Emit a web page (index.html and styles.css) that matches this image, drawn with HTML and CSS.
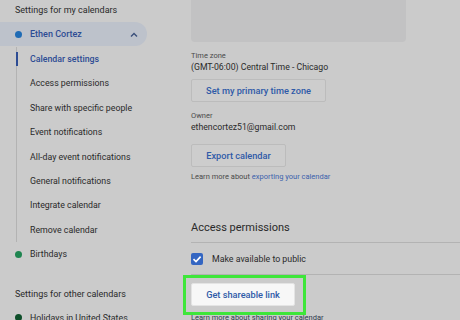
FILE: index.html
```html
<!DOCTYPE html>
<html>
<head>
<meta charset="utf-8">
<link rel="stylesheet" href="styles.css">
</head>
<body>
<div class="app">
  <aside class="sidebar">
    <div class="side-heading">Settings for my calendars</div>
    <div class="cal-row active">
      <span class="dot dot-blue"></span>
      <span class="cal-name">Ethen Cortez</span>
      <svg class="chev" width="8" height="5" viewBox="0 0 8 5"><path d="M1 4.5 L4 1.5 L7 4.5" fill="none" stroke="#3a4f7a" stroke-width="1.4"/></svg>
    </div>
    <ul class="sub-list">
      <li class="sub-item current">Calendar settings</li>
      <li class="sub-item">Access permissions</li>
      <li class="sub-item">Share with specific people</li>
      <li class="sub-item">Event notifications</li>
      <li class="sub-item">All-day event notifications</li>
      <li class="sub-item">General notifications</li>
      <li class="sub-item">Integrate calendar</li>
      <li class="sub-item">Remove calendar</li>
    </ul>
    <div class="cal-row">
      <span class="dot dot-green"></span>
      <span class="cal-plain">Birthdays</span>
    </div>
    <div class="side-heading other">Settings for other calendars</div>
    <div class="cal-row">
      <span class="dot dot-dark"></span>
      <span class="cal-plain">Holidays in United States</span>
    </div>
  </aside>
  <main class="main">
    <div class="map-box"></div>
    <div class="label first">Time zone</div>
    <div class="value">(GMT-06:00) Central Time - Chicago</div>
    <button class="btn tz">Set my primary time zone</button>
    <div class="label owner">Owner</div>
    <div class="value">ethencortez51@gmail.com</div>
    <button class="btn export">Export calendar</button>
    <div class="learn">Learn more about <span class="link">exporting your calendar</span></div>
    <h2 class="section-title">Access permissions</h2>
    <div class="check-row">
      <span class="checkbox"><svg width="12" height="12" viewBox="0 0 12 12"><path d="M2.5 6.2 L5 8.6 L9.6 3.6" fill="none" stroke="#fff" stroke-width="1.6"/></svg></span>
      <span class="check-label">Make available to public</span>
    </div>
    <div class="highlight">
      <button class="btn share">Get shareable link</button>
    </div>
    <div class="learn dark">Learn more about sharing your calendar</div>
  </main>
</div>
</body>
</html>
```
FILE: styles.css
```css
* { box-sizing: border-box; }
html, body { margin: 0; padding: 0; }
body {
  background: #cbcbcb;
  font-family: Roboto, "Liberation Sans", sans-serif;
  color: #2a2a2a;
  width: 460px;
  height: 320px;
  overflow: hidden;
}
.app { display: flex; }
.sidebar {
  width: 191px;
  flex: none;
  padding-top: 3px;
}
.side-heading {
  font-size: 9px;
  line-height: 15px;
  padding-left: 15px;
  color: #2a2a2a;
  white-space: nowrap;
}
.side-heading.other { margin-top: 20px; }
.cal-row {
  display: flex;
  align-items: center;
  height: 24.4px;
  padding-left: 15px;
  width: 147px;
  white-space: nowrap;
}
.cal-row.active {
  margin-top: 4px;
  height: 24px;
  background: #bdc2cb;
  border-radius: 0 12px 12px 0;
}
.side-heading.other + .cal-row { margin-top: 4px; }
.dot {
  width: 7px;
  height: 7px;
  border-radius: 50%;
  flex: none;
  margin-right: 8px;
}
.dot-blue { background: #1f6bb5; }
.dot-green { background: #1f8550; }
.dot-dark { background: #0e4f2a; }
.cal-name {
  font-size: 9px;
  font-weight: 500;
  color: #2d4c94;
  flex: 1;
}
.chev { margin-right: 9px; }
.cal-plain { font-size: 8.8px; color: #2a2a2a; }
.sub-list {
  list-style: none;
  margin: 1px 0 0 16px;
  padding: 0;
  border-left: 1px solid #b3b3b3;
}
.sub-item {
  height: 24.4px;
  line-height: 24.4px;
  padding-left: 13px;
  font-size: 8.8px;
  color: #2a2a2a;
  position: relative;
  white-space: nowrap;
}
.sub-item.current {
  color: #2d4c94;
  font-weight: 500;
}
.sub-item.current::before {
  content: "";
  position: absolute;
  left: -1px;
  top: 5px;
  width: 2px;
  height: 14px;
  background: #2d4c94;
}
.main {
  flex: 1;
  display: flex;
  flex-direction: column;
  align-items: flex-start;
}
.map-box {
  width: 215px;
  height: 42px;
  background: #c2c2c3;
  border-radius: 0 0 4px 4px;
}
.label {
  font-size: 7.5px;
  line-height: 10px;
  color: #4a4a4a;
}
.label.first { margin-top: 9px; }
.label.owner { margin-top: 9px; }
.value {
  font-size: 8.7px;
  line-height: 12px;
  color: #2a2a2a;
  white-space: nowrap;
}
.btn {
  font-family: Roboto, "Liberation Sans", sans-serif;
  font-size: 9.2px;
  font-weight: 500;
  color: #2f5aa8;
  background: #cdcdcd;
  border: 1px solid #bcbcbc;
  border-radius: 2px;
  height: 23px;
  padding: 0;
  margin-top: 6px;
  white-space: nowrap;
  text-align: center;
}
.btn.tz { width: 135px; }
.btn.export { margin-top: 11px; width: 95px; }
.learn {
  font-size: 7.5px;
  line-height: 10px;
  margin-top: 5px;
  color: #4a4a4a;
  white-space: nowrap;
}
.link { color: #3b62ac; }
.section-title {
  font-size: 11px;
  font-weight: 400;
  line-height: 16px;
  margin: 38px 0 0 0;
  color: #2a2a2a;
}
.check-row {
  align-self: stretch;
  display: flex;
  align-items: center;
  height: 33px;
  margin-top: 6px;
  border-top: 1px solid #b3b3b3;
  border-bottom: 1px solid #b3b3b3;
}
.checkbox {
  width: 12px;
  height: 12px;
  background: #3466c2;
  border-radius: 2px;
  display: flex;
  margin-right: 9px;
}
.check-label { font-size: 8.8px; color: #2a2a2a; }
.highlight {
  margin-left: -8px;
  border: 3px solid #3ee63a;
  padding: 5px 8px 6px 5px;
}
.btn.share {
  margin-top: 0;
  width: 104px;
  background: #f7f7f7;
  border-color: #e4e4e4;
}
.learn.dark {
  margin-top: -2px;
  color: #2f3a50;
}
```
